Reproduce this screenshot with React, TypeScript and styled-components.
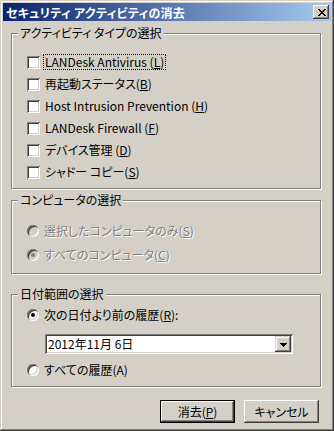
import styled, { createGlobalStyle } from "styled-components"

const GlobalStyle = createGlobalStyle`
  html, body {
    margin: 0;
    padding: 0;
    background: #d4d0c8;
  }
  body {
    font-family: "Noto Sans CJK JP", sans-serif;
    font-size: 12px;
    font-feature-settings: "palt";
    color: #000;
  }
`

const ACTIVITY_TYPES = [
  { text: "LANDesk Antivirus (", key: "L", tail: ")", focused: true },
  { text: "再起動ステータス(", key: "B", tail: ")" },
  { text: "Host Intrusion Prevention (", key: "H", tail: ")" },
  { text: "LANDesk Firewall (", key: "F", tail: ")" },
  { text: "デバイス管理 (", key: "D", tail: ")" },
  { text: "シャドー コピー(", key: "S", tail: ")" },
]

export default function App() {
  return (
    <>
      <GlobalStyle />
      <Window>
        <TitleBar>
          <span>セキュリティ アクティビティの消去</span>
          <CloseButton>
            <svg width="8" height="7" viewBox="0 0 8 7">
              <path d="M0 0h2v1h-2zM6 0h2v1h-2zM1 1h2v1h-2zM5 1h2v1h-2zM2 2h4v1h-4zM3 3h2v1h-2zM2 4h4v1h-4zM1 5h2v1h-2zM5 5h2v1h-2zM0 6h2v1h-2zM6 6h2v1h-2z" fill="#000" />
            </svg>
          </CloseButton>
        </TitleBar>

        <Body>
          <Group $height={163} $top={5}>
            <Legend>アクティビティ タイプの選択</Legend>
            <List $padTop={11}>
              {ACTIVITY_TYPES.map((t) => (
                <Row key={t.key} $height={22}>
                  <CheckBox />
                  <Caption $focused={t.focused}>
                    {t.text}
                    <u>{t.key}</u>
                    {t.tail}
                  </Caption>
                </Row>
              ))}
            </List>
          </Group>

          <Group $height={81} $top={4}>
            <Legend>コンピュータの選択</Legend>
            <List $padTop={12}>
              <Row $height={24}>
                <Radio $disabled />
                <Caption $disabled>
                  選択したコンピュータのみ(<u>S</u>)
                </Caption>
              </Row>
              <Row $height={24}>
                <Radio $disabled $checked />
                <Caption $disabled>
                  すべてのコンピュータ(<u>C</u>)
                </Caption>
              </Row>
            </List>
          </Group>

          <Group $height={100} $top={13}>
            <Legend>日付範囲の選択</Legend>
            <List $padTop={4}>
              <Row $height={20}>
                <Radio $checked />
                <Caption>
                  次の日付より前の履歴(<u>R</u>):
                </Caption>
              </Row>
              <Combo>
                <ComboText>2012年11月 6日</ComboText>
                <DropButton>
                  <svg width="7" height="4" viewBox="0 0 7 4">
                    <path d="M0 0h7v1h-7zM1 1h5v1h-5zM2 2h3v1h-3zM3 3h1v1h-1z" fill="#000" />
                  </svg>
                </DropButton>
              </Combo>
              <Row $height={20}>
                <Radio />
                <Caption>すべての履歴(A)</Caption>
              </Row>
            </List>
          </Group>

          <Buttons>
            <PushButton $default>
              消去(<u>P</u>)
            </PushButton>
            <PushButton>キャンセル</PushButton>
          </Buttons>
        </Body>
      </Window>
    </>
  )
}

const Window = styled.div`
  width: 334px;
  height: 431px;
  box-sizing: border-box;
  padding: 3px;
  background: #d4d0c8;
  box-shadow: inset -1px -1px #404040, inset 1px 1px #d4d0c8,
    inset -2px -2px #808080, inset 2px 2px #fff;
  display: flex;
  flex-direction: column;
`

const TitleBar = styled.div`
  height: 18px;
  flex-shrink: 0;
  display: flex;
  align-items: center;
  justify-content: space-between;
  padding: 0 2px 0 3px;
  background: linear-gradient(to right, #0a246a, #a6caf0);
  color: #fff;
  font-weight: bold;
  font-size: 12px;
  letter-spacing: 0.3px;
`

const CloseButton = styled.div`
  width: 16px;
  height: 14px;
  box-sizing: border-box;
  display: flex;
  align-items: center;
  justify-content: center;
  padding-left: 1px;
  background: #d4d0c8;
  box-shadow: inset -1px -1px #404040, inset 1px 1px #fff,
    inset -2px -2px #808080;
`

const Body = styled.div`
  display: flex;
  flex-direction: column;
  padding: 0 10px 0 8px;
`

const Group = styled.fieldset<{ $height: number; $top: number }>`
  margin: ${(p) => p.$top}px 0 0;
  padding: 0;
  min-width: 0;
  height: ${(p) => p.$height}px;
  box-sizing: border-box;
  border: 1px solid #808080;
  box-shadow: inset 1px 1px #fff, 1px 1px #fff;
`

const Legend = styled.legend`
  margin-left: 6px;
  padding: 0 2px;
  line-height: 14px;
  background: #d4d0c8;
  color: #000;
`

const List = styled.div<{ $padTop: number }>`
  display: flex;
  flex-direction: column;
  padding: ${(p) => p.$padTop}px 0 0 15px;
`

const Row = styled.label<{ $height: number }>`
  display: flex;
  align-items: center;
  gap: 5px;
  height: ${(p) => p.$height}px;
`

const Caption = styled.span<{ $disabled?: boolean; $focused?: boolean }>`
  line-height: 14px;
  padding: 0 1px;
  margin-left: -1px;
  color: ${(p) => (p.$disabled ? "#808080" : "#000")};
  text-shadow: ${(p) => (p.$disabled ? "1px 1px #fff" : "none")};
  outline: ${(p) => (p.$focused ? "1px dotted #000" : "none")};

  u {
    text-underline-offset: 1px;
  }
`

const CheckBox = styled.span`
  width: 13px;
  height: 13px;
  flex-shrink: 0;
  background: #fff;
  box-shadow: inset 1px 1px #808080, inset -1px -1px #fff,
    inset 2px 2px #404040, inset -2px -2px #d4d0c8;
`

const Radio = styled.span<{ $checked?: boolean; $disabled?: boolean }>`
  width: 12px;
  height: 12px;
  flex-shrink: 0;
  border-radius: 50%;
  display: flex;
  align-items: center;
  justify-content: center;
  background: ${(p) => (p.$disabled ? "#d4d0c8" : "#fff")};
  box-shadow: inset 1px 1px #808080, inset -1px -1px #fff,
    inset 2px 2px #404040, inset -2px -2px #d4d0c8;

  &::after {
    content: "";
    width: 4px;
    height: 4px;
    border-radius: 50%;
    background: ${(p) => (p.$disabled ? "#808080" : "#000")};
    display: ${(p) => (p.$checked ? "block" : "none")};
  }
`

const Combo = styled.div`
  display: flex;
  align-items: center;
  justify-content: space-between;
  width: 248px;
  height: 20px;
  box-sizing: border-box;
  margin: 9px 0 6px 18px;
  padding: 2px;
  background: #fff;
  box-shadow: inset 1px 1px #808080, inset -1px -1px #fff,
    inset 2px 2px #404040, inset -2px -2px #d4d0c8;
`

const ComboText = styled.span`
  padding-left: 1px;
  line-height: 14px;
`

const DropButton = styled.span`
  width: 16px;
  height: 16px;
  box-sizing: border-box;
  display: flex;
  align-items: center;
  justify-content: center;
  padding-top: 1px;
  background: #d4d0c8;
  box-shadow: inset -1px -1px #404040, inset 1px 1px #d4d0c8,
    inset -2px -2px #808080, inset 2px 2px #fff;
`

const Buttons = styled.div`
  display: flex;
  justify-content: flex-end;
  gap: 9px;
  margin-top: 13px;
  padding-right: 2px;
`

const PushButton = styled.button<{ $default?: boolean }>`
  width: 75px;
  height: 23px;
  box-sizing: border-box;
  padding: 0;
  border: ${(p) => (p.$default ? "1px solid #000" : "none")};
  background: #d4d0c8;
  font-family: inherit;
  font-size: 12px;
  font-feature-settings: "palt";
  color: #000;
  box-shadow: inset -1px -1px #404040, inset 1px 1px #fff,
    inset -2px -2px #808080, inset 2px 2px #d4d0c8;
`
